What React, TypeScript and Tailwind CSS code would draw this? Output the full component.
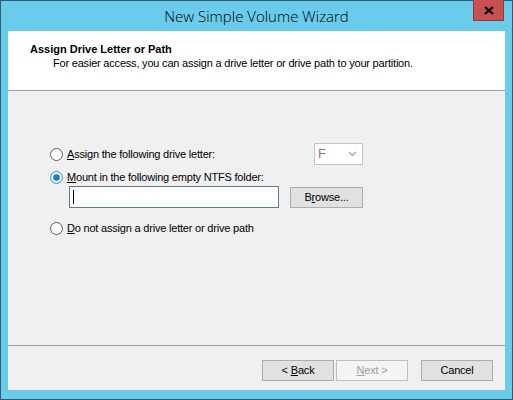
const font = { fontFamily: '"Liberation Sans", Arial, sans-serif' };

function Radio({ checked }: { checked?: boolean }) {
  return (
    <svg width="13" height="13" viewBox="0 0 13 13" className="shrink-0">
      <circle
        cx="6.5"
        cy="6.5"
        r="6"
        fill={checked ? "#e6f2fb" : "#ffffff"}
        stroke={checked ? "#3c8fd6" : "#5c5c5c"}
        strokeWidth="1"
      />
      {checked && <circle cx="6.5" cy="6.5" r="3.2" fill="#1e7ad0" />}
    </svg>
  );
}

function Btn({
  children,
  disabled,
}: {
  children: React.ReactNode;
  disabled?: boolean;
}) {
  return (
    <div
      className={
        "w-[72px] h-[21px] flex items-center justify-center text-[11px] tracking-[-0.2px] border " +
        (disabled
          ? "bg-[#f4f4f4] border-[#bfbfbf] text-[#a0a0a0]"
          : "bg-[#e1e1e1] border-[#adadad] text-black")
      }
    >
      {children}
    </div>
  );
}

export default function App() {
  return (
    <div
      className="w-[513px] h-[400px] bg-[#6bcbea] border border-[#2d5e73] flex flex-col select-none"
      style={font}
    >
      {/* Title bar */}
      <div className="relative h-[30px] shrink-0 flex items-center justify-center">
        <span
          className="text-[15px] font-light text-black mt-[1px]"
          style={{ fontFamily: '"Open Sans", "Noto Sans", sans-serif' }}
        >
          New Simple Volume Wizard
        </span>
        <div className="absolute top-[-1px] right-[8px] w-[31px] h-[21px] bg-[#c75050] border border-[#8e3a3a] border-t-0 flex items-center justify-center">
          <svg width="10" height="9" viewBox="0 0 10 9">
            <path d="M1 1 L9 8 M9 1 L1 8" stroke="#000" strokeWidth="2.2" />
          </svg>
        </div>
      </div>

      {/* Client */}
      <div className="mx-[7px] h-[359px] shrink-0 flex flex-col bg-[#f0f0f0]">
        {/* Header */}
        <div className="h-[59px] bg-white pt-[11px] pl-[22px] shrink-0">
          <div className="text-[11px] font-bold leading-[14px] text-black">
            Assign Drive Letter or Path
          </div>
          <div className="text-[11px] leading-[14px] pl-[23px] text-black tracking-[-0.2px]">
            For easier access, you can assign a drive letter or drive path to your partition.
          </div>
        </div>
        <div className="h-px bg-[#a0a0a0] shrink-0" />

        {/* Body */}
        <div className="flex-1 pl-[42px] pt-[52px] text-[11px] text-black tracking-[-0.2px]">
          <div className="flex items-center h-[22px]">
            <Radio />
            <span className="ml-[4px]">
              <span className="underline">A</span>ssign the following drive letter:
            </span>
            <div className="ml-auto mr-[142px] w-[49px] h-[22px] bg-white border border-[#c4c4c4] flex items-center justify-between pl-[3px] pr-[5px]">
              <span className="text-[13px] text-[#7a7a7a]">F</span>
              <svg width="9" height="6" viewBox="0 0 9 6">
                <path d="M1 1 L4.5 4.5 L8 1" fill="none" stroke="#a8a8a8" strokeWidth="1.4" />
              </svg>
            </div>
          </div>
          <div className="flex items-center h-[16px] mt-[4px]">
            <Radio checked />
            <span className="ml-[4px]">
              <span className="underline">M</span>ount in the following empty NTFS folder:
            </span>
          </div>
          <div className="flex items-center mt-[1px] ml-[19px]">
            <div className="w-[210px] h-[22px] bg-white border border-[#5b7c97] flex items-center pl-[3px]">
              <div className="w-px h-[14px] bg-black" />
            </div>
            <div className="ml-[11px] w-[73px] h-[21px] bg-[#e1e1e1] border border-[#adadad] flex items-center justify-center">
              B<span className="underline">r</span>owse...
            </div>
          </div>
          <div className="flex items-center h-[16px] mt-[12px]">
            <Radio />
            <span className="ml-[4px]">
              <span className="underline">D</span>o not assign a drive letter or drive path
            </span>
          </div>
        </div>

        <div className="h-px bg-[#a0a0a0] shrink-0" />
        {/* Buttons */}
        <div className="h-[44px] shrink-0 flex items-start pt-[14px] pl-[254px]">
          <Btn>
            &lt; <span className="underline ml-[3px]">B</span>ack
          </Btn>
          <div className="ml-[2px]">
            <Btn disabled>
              <span className="underline">N</span>ext &gt;
            </Btn>
          </div>
          <div className="ml-[13px]">
            <Btn>Cancel</Btn>
          </div>
        </div>
      </div>
    </div>
  );
}
